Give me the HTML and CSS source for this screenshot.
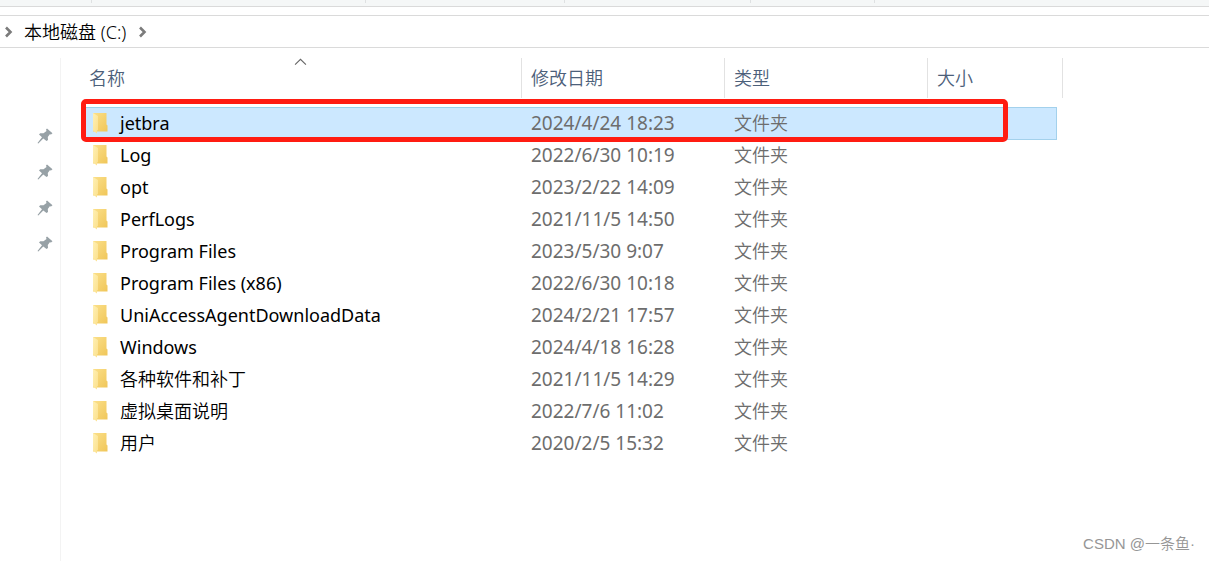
FILE: index.html
```html
<!DOCTYPE html>
<html lang="zh-CN">
<head>
<meta charset="utf-8">
<title>本地磁盘 (C:)</title>
<link rel="stylesheet" href="styles.css">
</head>
<body>
<svg class="defs" aria-hidden="true">
  <defs>
    <linearGradient id="back" x1="0" y1="0" x2="1" y2="1"><stop offset="0" stop-color="#fbe08a"/><stop offset="1" stop-color="#f0c659"/></linearGradient>
    <linearGradient id="flap" x1="0" y1="0" x2="1" y2="1"><stop offset="0" stop-color="#fff0b4"/><stop offset="1" stop-color="#fbe08c"/></linearGradient>
    <symbol id="folder" viewBox="0 0 16 22">
      <path d="M0 1H13.500V12.500L14.500 13.500V19.500H0Z" fill="url(#back)"/>
      <path d="M0 1L5 4V18.500L4 18V21.500L0 18.500Z" fill="url(#flap)"/>
    </symbol>
    <symbol id="pin" viewBox="0 0 16 16">
      <path d="M10 .5L15.500 5.300L14 6.500L12.800 6.200L10.800 9L11 12L9.500 13L6.300 10.500L1.300 15.500L.5 15L5 9.300L2 6.600L3.200 5.200L6.500 5.200L9.500 3L9 1.600Z" fill="#97a1a6"/>
    </symbol>
    <symbol id="chevron" viewBox="0 0 10 12">
      <path d="M2 1.500L6.500 6L2 10.500" fill="none" stroke="#7b7b7b" stroke-width="2.600"/>
    </symbol>
  </defs>
</svg>
<div class="ribbon"><span class="group group-a"></span><span class="group group-b"></span><span class="group group-c"></span><span class="group group-d"></span><span class="group group-e"></span></div>
<nav class="address">
  <svg class="chevron"><use href="#chevron"/></svg>
  <a class="crumb" href="#">本地磁盘 (C:)</a>
  <svg class="chevron"><use href="#chevron"/></svg>
</nav>
<div class="body">
  <aside class="quick">
    <svg class="pin"><use href="#pin"/></svg>
    <svg class="pin"><use href="#pin"/></svg>
    <svg class="pin"><use href="#pin"/></svg>
    <svg class="pin"><use href="#pin"/></svg>
  </aside>
  <main class="files">
    <table class="list">
      <colgroup><col class="col-name"><col class="col-mid"><col class="col-mid"><col class="col-size"></colgroup>
      <thead>
        <tr><th>名称<svg class="sort" viewBox="0 0 12 7"><path d="M1 6L6 1L11 6" fill="none" stroke="#666"/></svg></th><th>修改日期</th><th>类型</th><th>大小</th></tr>
      </thead>
      <tbody>
        <tr class="selected"><td><div class="name"><svg class="folder"><use href="#folder"/></svg>jetbra</div><div class="marker"></div></td><td class="date">2024/4/24 18:23</td><td class="kind">文件夹</td><td></td></tr>
        <tr><td><div class="name"><svg class="folder"><use href="#folder"/></svg>Log</div></td><td class="date">2022/6/30 10:19</td><td class="kind">文件夹</td><td></td></tr>
        <tr><td><div class="name"><svg class="folder"><use href="#folder"/></svg>opt</div></td><td class="date">2023/2/22 14:09</td><td class="kind">文件夹</td><td></td></tr>
        <tr><td><div class="name"><svg class="folder"><use href="#folder"/></svg>PerfLogs</div></td><td class="date">2021/11/5 14:50</td><td class="kind">文件夹</td><td></td></tr>
        <tr><td><div class="name"><svg class="folder"><use href="#folder"/></svg>Program Files</div></td><td class="date">2023/5/30 9:07</td><td class="kind">文件夹</td><td></td></tr>
        <tr><td><div class="name"><svg class="folder"><use href="#folder"/></svg>Program Files (x86)</div></td><td class="date">2022/6/30 10:18</td><td class="kind">文件夹</td><td></td></tr>
        <tr><td><div class="name"><svg class="folder"><use href="#folder"/></svg>UniAccessAgentDownloadData</div></td><td class="date">2024/2/21 17:57</td><td class="kind">文件夹</td><td></td></tr>
        <tr><td><div class="name"><svg class="folder"><use href="#folder"/></svg>Windows</div></td><td class="date">2024/4/18 16:28</td><td class="kind">文件夹</td><td></td></tr>
        <tr><td><div class="name name-cjk"><svg class="folder"><use href="#folder"/></svg>各种软件和补丁</div></td><td class="date">2021/11/5 14:29</td><td class="kind">文件夹</td><td></td></tr>
        <tr><td><div class="name name-cjk"><svg class="folder"><use href="#folder"/></svg>虚拟桌面说明</div></td><td class="date">2022/7/6 11:02</td><td class="kind">文件夹</td><td></td></tr>
        <tr><td><div class="name name-cjk"><svg class="folder"><use href="#folder"/></svg>用户</div></td><td class="date">2020/2/5 15:32</td><td class="kind">文件夹</td><td></td></tr>
      </tbody>
    </table>
  </main>
</div>
<div class="watermark">CSDN @一条鱼·</div>
</body>
</html>
```
FILE: styles.css
```css
* { box-sizing: border-box; }
body {
  margin: 0;
  min-height: 100vh;
  display: flex;
  flex-direction: column;
  background: #fff;
  color: #000;
  font: 18px/32px "Noto Sans", "Noto Sans CJK SC", sans-serif;
}
.defs { position: absolute; width: 0; height: 0; }
.ribbon {
  display: flex;
  height: 7px;
  background: #f5f7f7;
  border-bottom: 1px solid #dadada;
}
.group { height: 3px; border-right: 1px solid #dfe1e2; }
.group-a { width: 92px; }
.group-b { width: 274px; }
.group-c { width: 199px; }
.group-d { width: 186px; }
.group-e { width: 124px; }
.address {
  display: flex;
  align-items: center;
  gap: 10px;
  height: 33px;
  margin-top: 8px;
  padding-left: 4px;
  border-top: 1px solid #dadada;
  border-bottom: 1px solid #dadada;
}
.chevron { width: 10px; height: 12px; }
.crumb { margin-right: 2px; color: #000; font-weight: 350; line-height: 30px; text-decoration: none; }
.body { display: flex; flex: 1; padding-top: 10px; }
.quick {
  display: flex;
  flex-direction: column;
  align-items: flex-end;
  gap: 20px;
  width: 61px;
  padding: 70px 7px 0 0;
  border-right: 1px solid #f3f3f3;
}
.pin { width: 16px; height: 16px; }
.files { flex: 1; padding-left: 24px; }
.list { width: 972px; table-layout: fixed; border-collapse: separate; border-spacing: 0; }
.col-name { width: 437px; }
.col-mid { width: 203px; }
.col-size { width: 129px; }
th {
  position: relative;
  height: 40px;
  padding: 0 0 0 9px;
  border-right: 1px solid #e2e2e2;
  color: #4c607a;
  font-weight: 350;
  text-align: left;
}
th:first-child { padding-left: 4px; }
th:last-child { border-right: 0; }
th:last-child::after {
  content: "";
  position: absolute;
  top: 0;
  right: -6px;
  height: 40px;
  border-right: 1px solid #e2e2e2;
}
.sort { position: absolute; top: 0; left: 209px; width: 13px; height: 8px; }
tbody::before { content: ""; display: block; height: 9px; }
td { height: 32px; padding: 0 0 0 9px; color: #6d6d6d; }
td:first-child { position: relative; padding-left: 8px; color: #000; }
.name { display: flex; align-items: center; gap: 11px; }
.name-cjk { font-weight: 350; }
.folder { width: 16px; height: 22px; }
.date { font-size: 19px; }
.kind { font-weight: 350; }
.selected td { background: #cce8ff; box-shadow: inset 0 1px #99d1ed, 0 1px #99d1ed; }
.selected td:last-child { box-shadow: inset 0 1px #a3d1ec, 0 1px #a3d1ec, inset -1px 0 #a3d1ec; }
.marker {
  position: absolute;
  z-index: 1;
  top: -8px;
  left: -4px;
  width: 927px;
  height: 43px;
  border: 5px solid #ff1c12;
  border-radius: 5px;
}
.watermark {
  position: absolute;
  right: 14px;
  bottom: 5px;
  color: #969696;
  font-family: "Liberation Sans", "Noto Sans CJK SC", sans-serif;
  font-size: 15px;
  font-weight: 350;
  line-height: 24px;
}
```
